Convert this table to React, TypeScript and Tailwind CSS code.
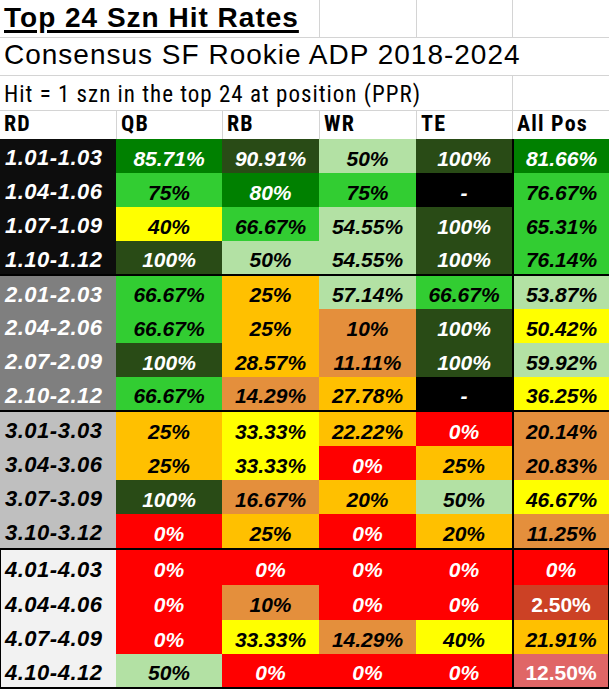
import React from "react";

type C = "dg" | "dk" | "lime" | "lt" | "yel" | "amb" | "org" | "red" | "blk" | "dred" | "lred";

const bg: Record<C, string> = {
  dg: "bg-[#008000] text-white",
  dk: "bg-[#294b16] text-white",
  lime: "bg-[#32cd32] text-black",
  lt: "bg-[#b3e1a4] text-black",
  yel: "bg-[#ffff00] text-black",
  amb: "bg-[#ffc000] text-black",
  org: "bg-[#e48f3c] text-black",
  red: "bg-[#ff0000] text-white",
  blk: "bg-[#000000] text-white",
  dred: "bg-[#cc4125] text-white not-italic",
  lred: "bg-[#e06666] text-white not-italic",
};

type Row = { rd: string; cells: [string, C][] };

const groups: { rdCls: string; boxCls: string; heights: string[]; rows: Row[] }[] = [
  {
    rdCls: "bg-[#0d0d0d] text-white",
    boxCls: "",
    heights: ["h-[34px]", "h-[34px]", "h-[34px]", "h-[33px]"],
    rows: [
      { rd: "1.01-1.03", cells: [["85.71%", "dg"], ["90.91%", "dk"], ["50%", "lt"], ["100%", "dk"], ["81.66%", "dg"]] },
      { rd: "1.04-1.06", cells: [["75%", "lime"], ["80%", "dg"], ["75%", "lime"], ["-", "blk"], ["76.67%", "lime"]] },
      { rd: "1.07-1.09", cells: [["40%", "yel"], ["66.67%", "lime"], ["54.55%", "lt"], ["100%", "dk"], ["65.31%", "lime"]] },
      { rd: "1.10-1.12", cells: [["100%", "dk"], ["50%", "lt"], ["54.55%", "lt"], ["100%", "dk"], ["76.14%", "lime"]] },
    ],
  },
  {
    rdCls: "bg-[#7f7f7f] text-white",
    boxCls: "",
    heights: ["h-[33px]", "h-[34px]", "h-[34px]", "h-[33px]"],
    rows: [
      { rd: "2.01-2.03", cells: [["66.67%", "lime"], ["25%", "amb"], ["57.14%", "lt"], ["66.67%", "lime"], ["53.87%", "lt"]] },
      { rd: "2.04-2.06", cells: [["66.67%", "lime"], ["25%", "amb"], ["10%", "org"], ["100%", "dk"], ["50.42%", "yel"]] },
      { rd: "2.07-2.09", cells: [["100%", "dk"], ["28.57%", "amb"], ["11.11%", "org"], ["100%", "dk"], ["59.92%", "lt"]] },
      { rd: "2.10-2.12", cells: [["66.67%", "lime"], ["14.29%", "org"], ["27.78%", "amb"], ["-", "blk"], ["36.25%", "yel"]] },
    ],
  },
  {
    rdCls: "bg-[#bfbfbf] text-black",
    boxCls: "",
    heights: ["h-[34px]", "h-[34px]", "h-[34px]", "h-[34px]"],
    rows: [
      { rd: "3.01-3.03", cells: [["25%", "amb"], ["33.33%", "yel"], ["22.22%", "amb"], ["0%", "red"], ["20.14%", "org"]] },
      { rd: "3.04-3.06", cells: [["25%", "amb"], ["33.33%", "yel"], ["0%", "red"], ["25%", "amb"], ["20.83%", "org"]] },
      { rd: "3.07-3.09", cells: [["100%", "dk"], ["16.67%", "org"], ["20%", "amb"], ["50%", "lt"], ["46.67%", "yel"]] },
      { rd: "3.10-3.12", cells: [["0%", "red"], ["25%", "amb"], ["0%", "red"], ["20%", "amb"], ["11.25%", "org"]] },
    ],
  },
  {
    rdCls: "bg-[#f2f2f2] text-black",
    boxCls: "",
    heights: ["h-[35px]", "h-[35px]", "h-[34px]", "h-[33px]"],
    rows: [
      { rd: "4.01-4.03", cells: [["0%", "red"], ["0%", "red"], ["0%", "red"], ["0%", "red"], ["0%", "red"]] },
      { rd: "4.04-4.06", cells: [["0%", "red"], ["10%", "org"], ["0%", "red"], ["0%", "red"], ["2.50%", "dred"]] },
      { rd: "4.07-4.09", cells: [["0%", "red"], ["33.33%", "yel"], ["14.29%", "org"], ["40%", "yel"], ["21.91%", "amb"]] },
      { rd: "4.10-4.12", cells: [["50%", "lt"], ["0%", "red"], ["0%", "red"], ["0%", "red"], ["12.50%", "lred"]] },
    ],
  },
];

const cols = "grid grid-cols-[116px_106px_97px_97px_96px_97px]";
const arial = "font-['Liberation_Sans',Arial,sans-serif]";
const narrow = "font-['Roboto_Condensed','Roboto',sans-serif]";
const grid = "border-[#d4d4d4]";

export default function App() {
  return (
    <div className="w-[609px] h-[689px] bg-white overflow-hidden text-black">
      {/* Title row */}
      <div className={`${cols} h-[38px] border-b ${grid}`}>
        <div className={`col-span-3 pt-[4px] pl-[4px] whitespace-nowrap ${arial} text-[28px] leading-none font-bold tracking-[1px]`}>
          <span className="underline decoration-[3px] underline-offset-[3px]">Top 24 Szn Hit Rates</span>
        </div>
        <div className={`border-l ${grid}`} />
        <div className={`border-l ${grid}`} />
        <div className={`border-l ${grid}`} />
      </div>
      {/* Subtitle row */}
      <div className={`h-[38px] border-b ${grid} pt-[3px] pl-[4px] whitespace-nowrap ${arial} text-[28px] leading-none tracking-[1px]`}>
        Consensus SF Rookie ADP 2018-2024
      </div>
      {/* Hit row */}
      <div className={`${cols} h-[35px] border-b ${grid}`}>
        <div className={`col-span-5 pt-[7px] pl-[4px] whitespace-nowrap ${narrow} text-[23px] leading-none tracking-[1px]`}>
          Hit = 1 szn in the top 24 at position (PPR)
        </div>
        <div className={`border-l ${grid}`} />
      </div>
      {/* Header row */}
      <div className={`${cols} h-[28px] ${narrow} font-bold text-[22px] leading-none tracking-[1.2px]`}>
        {["RD", "QB", "RB", "WR", "TE", "All Pos"].map((h, i) => (
          <div key={h} className={`pt-[2px] pl-[4px] whitespace-nowrap ${i > 0 ? `border-l ${grid}` : ""}`}>
            {h}
          </div>
        ))}
      </div>
      {/* Data */}
      {groups.map((g, gi) => (
        <div key={gi} className={`border-b-2 border-black ${gi === 3 ? "border-x border-x-black" : ""}`}>
          {g.rows.map((r, ri) => (
            <div
              key={r.rd}
              className={`grid ${gi === 3 ? "grid-cols-[115px_106px_97px_97px_96px_96px]" : "grid-cols-[116px_106px_97px_97px_96px_97px]"} ${g.heights[ri]} ${arial} font-bold italic leading-none`}
            >
              <div className={`${g.rdCls} flex items-center pt-[4px] ${gi === 3 ? "pl-[4px]" : "pl-[5px]"} text-[22px] tracking-[0.5px] whitespace-nowrap`}>
                {r.rd}
              </div>
              {r.cells.map(([v, c], ci) => (
                <div
                  key={ci}
                  className={`${bg[c]} flex items-center justify-center pt-[4px] text-[21px] whitespace-nowrap ${ci === 4 ? "border-l-2 border-black" : ""}`}
                >
                  {v}
                </div>
              ))}
            </div>
          ))}
        </div>
      ))}
    </div>
  );
}
